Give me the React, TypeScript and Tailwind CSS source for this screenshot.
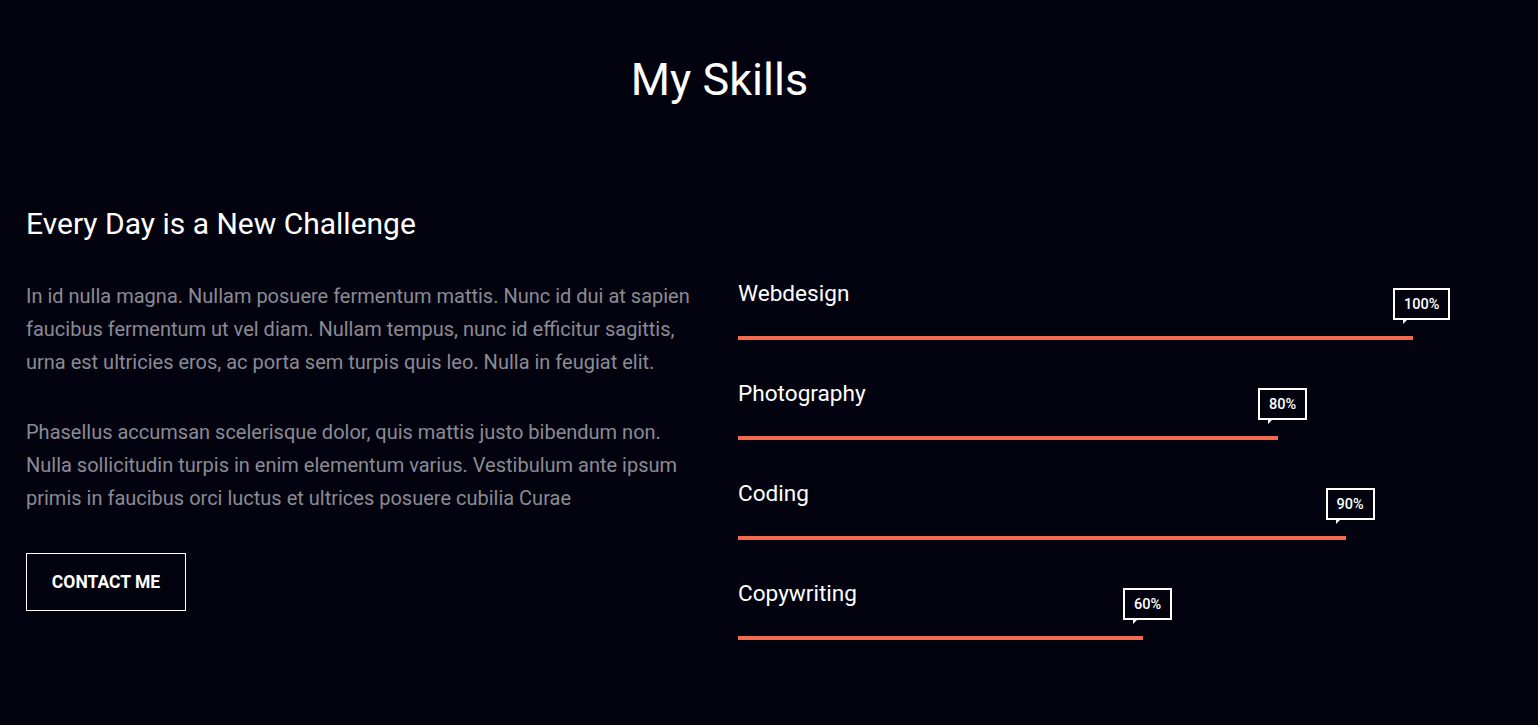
const skills = [
  { name: 'Webdesign', pct: 100 },
  { name: 'Photography', pct: 80 },
  { name: 'Coding', pct: 90 },
  { name: 'Copywriting', pct: 60 },
]

function SkillBar({ name, pct }: { name: string; pct: number }) {
  return (
    <div className="h-[100px]">
      <div className="h-[30px] text-[22.6px] leading-[31px] text-white">{name}</div>
      <div className="relative mt-[28px] h-[4px] w-full">
        <div className="h-full bg-[#f26b4e]" style={{ width: `${pct}%` }} />
        <div
          className="absolute bottom-[20px] border-2 border-white px-[9px] pt-[2px] h-[32px] flex items-center text-[14.5px] font-medium text-white whitespace-nowrap"
          style={{ left: `calc(${pct}% - 20px)` }}
        >
          {pct}%
          <span className="absolute top-full left-[8px] w-0 h-0 border-l-[6px] border-l-white border-b-[6px] border-b-transparent" />
        </div>
      </div>
    </div>
  )
}

export default function App() {
  return (
    <div className="min-h-[725px] w-full bg-[#03030f] font-['Roboto',sans-serif] text-white">
      <div className="pt-[55px] pl-[26px]">
        {/* Title */}
        <h2 className="w-[1387px] text-center text-[45px] leading-[50px] font-normal">My Skills</h2>

        <div className="mt-[101px] grid grid-cols-[677px_675px] gap-[35px]">
          {/* Left column */}
          <div>
            <h3 className="text-[30px] leading-[36px] font-normal">Every Day is a New Challenge</h3>
            <p className="mt-[38px] text-[20px] leading-[33px] text-[#8b8b94]">
              In id nulla magna. Nullam posuere fermentum mattis. Nunc id dui at sapien faucibus fermentum ut vel
              diam. Nullam tempus, nunc id efficitur sagittis, urna est ultricies eros, ac porta sem turpis quis leo.
              Nulla in feugiat elit.
            </p>
            <p className="mt-[37px] text-[20px] leading-[33px] text-[#8b8b94]">
              Phasellus accumsan scelerisque dolor, quis mattis justo bibendum non. Nulla sollicitudin turpis in enim
              elementum varius. Vestibulum ante ipsum primis in faucibus orci luctus et ultrices posuere cubilia Curae
            </p>
            <button className="mt-[38px] w-[160px] h-[58px] border border-white text-[17.5px] font-bold uppercase text-white">
              Contact me
            </button>
          </div>

          {/* Right column */}
          <div className="pt-[72px]">
            {skills.map((s) => (
              <SkillBar key={s.name} name={s.name} pct={s.pct} />
            ))}
          </div>
        </div>
      </div>
    </div>
  )
}
